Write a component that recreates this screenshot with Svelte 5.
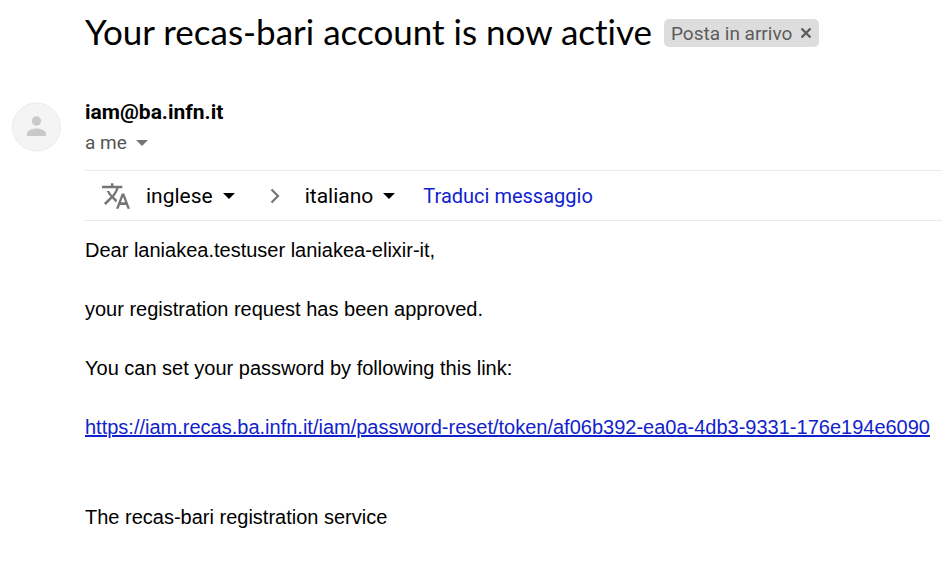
<script>
  let from = $state("inglese");
  let to = $state("italiano");
  const languages = ["inglese", "italiano"];
</script>

<main class="mail">
  <header class="subject">
    <h1>Your recas-bari account is now active</h1>
    <div class="label">
      <span>Posta in arrivo</span>
      <button type="button" aria-label="Rimuovi etichetta">
        <svg width="12" height="12" viewBox="0 0 12 12" aria-hidden="true"><path d="M1.500 1.500l9 9M10.500 1.500l-9 9" stroke="#5c5c5c" stroke-width="2.400" fill="none" /></svg>
      </button>
    </div>
  </header>

  <div class="message">
    <div class="avatar">
      <svg width="50" height="50" viewBox="0 0 50 50" aria-hidden="true">
        <circle cx="25.500" cy="25" r="24" fill="#f4f4f4" stroke="#ebebeb" />
        <circle cx="25.500" cy="19" r="4.700" fill="#c9c9c9" />
        <path d="M16 34v-2.500c0-3.400 6.300-5 9.500-5s9.500 1.600 9.500 5V34z" fill="#c9c9c9" />
      </svg>
    </div>

    <div class="content">
      <div class="sender">iam@ba.infn.it</div>
      <button type="button" class="recipient">
        a me
        <svg width="12" height="6" viewBox="0 0 12 6" aria-hidden="true"><path d="M0 0h12L6 6z" fill="#757575" /></svg>
      </button>

      <div class="translate">
        <svg class="glyph" width="28" height="28" viewBox="1 2 22 20" aria-hidden="true">
          <path fill="#757575" d="M12.870 15.070l-2.540-2.510.03-.03c1.740-1.940 2.980-4.170 3.710-6.530H17V4h-7V2H8v2H1v1.990h11.170C11.500 7.920 10.440 9.750 9 11.350 8.070 10.320 7.300 9.190 6.690 8h-2c.73 1.630 1.730 3.170 2.980 4.560l-5.090 5.020L4 19l5-5 3.110 3.110.76-2.040zM18.500 10h-2L12 22h2l1.120-3h4.750L21 22h2l-4.500-12zm-2.620 7l1.620-4.330L19.120 17h-3.240z" />
        </svg>
        <label class="language">
          <select bind:value={from} aria-label="Lingua di origine">
            {#each languages as language}
              <option value={language}>{language}</option>
            {/each}
          </select>
          <svg width="12" height="6" viewBox="0 0 12 6" aria-hidden="true"><path d="M0 0h12L6 6z" fill="#000" /></svg>
        </label>
        <svg class="chevron" width="10" height="16" viewBox="0 0 10 16" aria-hidden="true"><path d="M1.500 1.500L8 8l-6.500 6.500" fill="none" stroke="#757575" stroke-width="2.200" /></svg>
        <label class="language">
          <select bind:value={to} aria-label="Lingua di destinazione">
            {#each languages as language}
              <option value={language}>{language}</option>
            {/each}
          </select>
          <svg width="12" height="6" viewBox="0 0 12 6" aria-hidden="true"><path d="M0 0h12L6 6z" fill="#000" /></svg>
        </label>
        <button type="button" class="action">Traduci messaggio</button>
      </div>

      <div class="body">
        <p>Dear laniakea.testuser laniakea-elixir-it,</p>
        <p>your registration request has been approved.</p>
        <p>You can set your password by following this link:</p>
        <p><a href="https://iam.recas.ba.infn.it/iam/password-reset/token/af06b392-ea0a-4db3-9331-176e194e6090">https://iam.recas.ba.infn.it/iam/password-reset/token/af06b392-ea0a-4db3-9331-176e194e6090</a></p>
        <p class="signature">The recas-bari registration service</p>
      </div>
    </div>
  </div>
</main>

<style>
  :global(body) {
    margin: 0;
    background: #fff;
  }
  .mail {
    font-family: Roboto, "Liberation Sans", sans-serif;
    color: #000;
    padding: 10px 0 32px;
  }
  button,
  select {
    appearance: none;
    border: 0;
    padding: 0;
    margin: 0;
    background: none;
    font: inherit;
    color: inherit;
    cursor: pointer;
  }
  select {
    field-sizing: content;
  }
  svg {
    display: block;
    flex: none;
  }
  .subject {
    display: flex;
    align-items: center;
    gap: 12px;
    padding-left: 85px;
  }
  h1 {
    margin: 0;
    font-family: Lato, "Liberation Sans", sans-serif;
    font-size: 35px;
    line-height: 42px;
    font-weight: 400;
    font-variant-ligatures: none;
  }
  .label {
    display: flex;
    align-items: center;
    gap: 8px;
    height: 28px;
    margin-top: 4px;
    padding: 0 7px;
    border-radius: 5px;
    background: #ddd;
    color: #5c5c5c;
    font-size: 19px;
    white-space: nowrap;
  }
  .message {
    display: flex;
    gap: 24px;
    padding: 48px 0 0 11px;
  }
  .avatar {
    padding-top: 2px;
  }
  .content {
    flex: 1;
    min-width: 0;
  }
  .sender {
    font-size: 21px;
    line-height: 24px;
    font-weight: 700;
  }
  .recipient {
    display: flex;
    align-items: center;
    gap: 9px;
    margin: 7px 0 15px;
    font-size: 19px;
    line-height: 24px;
    color: #555;
  }
  .translate {
    display: flex;
    align-items: center;
    height: 49px;
    padding-left: 17px;
    border-top: 1px solid #e8eaed;
    border-bottom: 1px solid #e8eaed;
    font-size: 21px;
  }
  .glyph {
    margin-right: 16px;
  }
  .language {
    display: flex;
    align-items: center;
    gap: 10px;
  }
  .chevron {
    margin: 0 25px 0 35px;
  }
  .action {
    margin-left: 28px;
    font-size: 20px;
    color: #1122cc;
  }
  .body {
    padding-top: 14px;
    font-family: "Liberation Sans", Arial, sans-serif;
    font-size: 20px;
    line-height: 30px;
  }
  p {
    margin: 0 0 29px;
  }
  .signature {
    margin: 60px 0 0;
  }
  a {
    color: #1122cc;
  }
</style>
